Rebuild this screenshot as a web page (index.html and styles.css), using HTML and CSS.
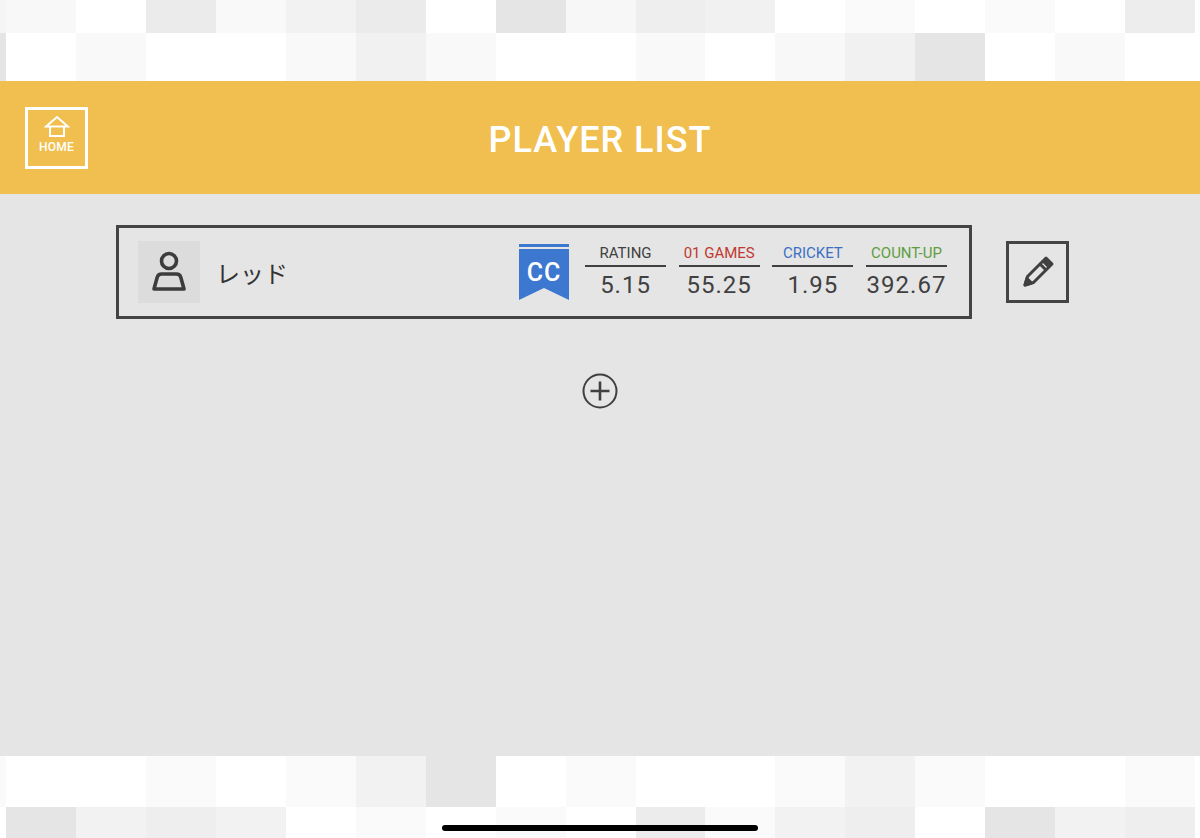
FILE: index.html
```html
<!DOCTYPE html>
<html lang="ja">
<head>
<meta charset="utf-8">
<title>Player List</title>
<link rel="stylesheet" href="styles.css">
</head>
<body>
<div class="screen">
  <div class="band band-top"></div>
  <header class="header">
    <a class="home" href="#">
      <svg class="home-icon" viewBox="0 0 26 24" width="26" height="24" fill="none" stroke="#fff" stroke-width="2"><path d="M2 11.5 13 2l11 9.500z" stroke-linejoin="miter"/><path d="M6 11.500V21h14v-9.500"/></svg>
      <span class="home-label">HOME</span>
    </a>
    <h1 class="title">PLAYER LIST</h1>
  </header>
  <main class="main">
    <div class="player-row">
      <section class="card">
        <div class="avatar">
          <svg viewBox="0 0 62 62" width="62" height="62" fill="none" stroke="#3c3c3c" stroke-width="3.600"><circle cx="31" cy="20" r="7.500"/><path d="M23.500 33h15c2.500 0 3.500 1 4.200 3l3.300 12H16l3.300-12c.7-2 1.700-3 4.200-3z" stroke-linejoin="round"/></svg>
        </div>
        <div class="name">レッド</div>
        <div class="badge">
          <svg class="badge-shape" viewBox="0 0 50 56" width="50" height="56"><rect width="50" height="3" fill="#3c78d0"/><path d="M0 5h50v51L25 44 0 56z" fill="#3c78d0"/></svg>
          <span class="badge-text">CC</span>
        </div>
        <div class="stats">
          <div class="stat"><div class="stat-label">RATING</div><div class="stat-value">5.15</div></div>
          <div class="stat"><div class="stat-label red">01 GAMES</div><div class="stat-value">55.25</div></div>
          <div class="stat"><div class="stat-label blue">CRICKET</div><div class="stat-value">1.95</div></div>
          <div class="stat"><div class="stat-label green">COUNT-UP</div><div class="stat-value">392.67</div></div>
        </div>
      </section>
      <a class="edit" href="#">
        <svg viewBox="0 0 34 34" width="34" height="34" fill="none" stroke="#404040" stroke-width="3" stroke-linejoin="round"><path d="M4 30l2.500-8.500L22 6l6 6-15.500 15.500z"/><path d="M19 9l6 6"/><path d="M4 30l2-6.500 4.500 4.500z" fill="#404040"/><path d="M23 5l2-2 6 6-2 2z" fill="#404040"/></svg>
      </a>
    </div>
    <button class="add" type="button" aria-label="add">
      <svg viewBox="0 0 36 36" width="36" height="36" fill="none" stroke="#404040"><circle cx="18" cy="18" r="16.500" stroke-width="2"/><path d="M18 8.500v19M8.500 18h19" stroke-width="2.600"/></svg>
    </button>
  </main>
  <div class="band band-bottom"></div>
  <div class="indicator"></div>
</div>
</body>
</html>
```
FILE: styles.css
```css
* { box-sizing: border-box; }
html, body { margin: 0; padding: 0; }
body {
  font-family: "Roboto", "Noto Sans CJK JP", sans-serif;
  background: #e5e5e5;
  color: #404040;
}
.screen {
  position: relative;
  width: 1200px;
  height: 838px;
  overflow: hidden;
  display: flex;
  flex-direction: column;
}
.band { flex: none; background-repeat: no-repeat; }
.band-top {
  height: 81px;
  background-image:
    linear-gradient(90deg,
      #f5f5f5 0 6px, #f8f8f8 6px 76px, #fff 76px 146px, #ebebeb 146px 216px, #f9f9f9 216px 286px,
      #f2f2f2 286px 356px, #ebebeb 356px 426px, #fff 426px 496px, #e5e5e5 496px 566px, #f7f7f7 566px 636px,
      #eee 636px 705px, #f1f1f1 705px 775px, #fff 775px 845px, #fafafa 845px 915px, #fff 915px 985px,
      #fafafa 985px 1055px, #fff 1055px 1125px, #ededed 1125px 1195px, #fff 1195px),
    linear-gradient(90deg,
      #e5e5e5 0 6px, #fff 6px 76px, #f9f9f9 76px 146px, #fff 146px 286px, #f9f9f9 286px 356px,
      #f1f1f1 356px 426px, #f9f9f9 426px 496px, #fff 496px 636px, #f9f9f9 636px 705px, #fff 705px 775px,
      #f8f8f8 775px 845px, #f1f1f1 845px 915px, #e5e5e5 915px 985px, #fff 985px 1055px, #f9f9f9 1055px 1125px,
      #fff 1125px);
  background-size: 100% 33px, 100% 48px;
  background-position: 0 0, 0 33px;
}
.band-bottom {
  height: 82px;
  background-image:
    linear-gradient(90deg,
      #fafafa 0 6px, #fff 6px 146px, #fafafa 146px 216px, #fff 216px 286px, #fafafa 286px 356px,
      #f2f2f2 356px 426px, #e5e5e5 426px 496px, #fff 496px 566px, #fafafa 566px 636px, #fff 636px 775px,
      #fafafa 775px 845px, #f2f2f2 845px 915px, #fafafa 915px 985px, #fff 985px 1125px, #fafafa 1125px 1195px,
      #fff 1195px),
    linear-gradient(90deg,
      #fff 0 6px, #e5e5e5 6px 76px, #f2f2f2 76px 146px, #eee 146px 216px, #f2f2f2 216px 286px,
      #fff 286px 356px, #fafafa 356px 426px, #fff 426px 496px, #fafafa 496px 566px, #fff 566px 636px,
      #ececec 636px 705px, #fafafa 705px 775px, #f2f2f2 775px 845px, #eee 845px 915px, #fff 915px 985px,
      #e5e5e5 985px 1055px, #f2f2f2 1055px 1125px, #eee 1125px 1195px, #fff 1195px);
  background-size: 100% 51px, 100% 31px;
  background-position: 0 0, 0 51px;
}
.header {
  flex: none;
  height: 113px;
  background: #f0bf50;
  display: flex;
  align-items: center;
  justify-content: center;
  position: relative;
}
.home {
  position: absolute;
  left: 25px;
  top: 26px;
  width: 63px;
  height: 62px;
  border: 3px solid #fff;
  display: flex;
  flex-direction: column;
  align-items: center;
  color: #fff;
  text-decoration: none;
}
.home-icon { margin-top: 5px; display: block; }
.home-label { font-size: 12px; line-height: 14px; margin-top: 1px; letter-spacing: .2px; font-weight: 500; }
.title {
  margin: 0;
  color: #fff;
  font-size: 36px;
  font-weight: 500;
  line-height: 40px;
  letter-spacing: 1px;
  position: relative;
  top: 2px;
}
.main { flex: 1; padding-top: 31px; display: flex; flex-direction: column; align-items: center; }
.player-row { display: flex; align-items: center; align-self: flex-start; margin-left: 116px; gap: 34px; }
.card {
  width: 856px;
  height: 94px;
  border: 3px solid #444;
  display: flex;
  align-items: center;
  padding: 0 22px 0 19px;
}
.avatar { width: 62px; height: 62px; background: #dcdcdc; flex: none; }
.avatar svg { display: block; }
.name { margin-left: 16px; font-size: 24px; color: #333; font-family: "Noto Sans CJK JP", sans-serif; flex: 1; }
.badge { position: relative; width: 50px; height: 56px; flex: none; }
.badge-shape { display: block; }
.badge-text {
  position: absolute;
  left: 0;
  right: 0;
  top: 15px;
  text-align: center;
  color: #fff;
  font-size: 25px;
  line-height: 28px;
  font-weight: 500;
  letter-spacing: 1px;
}
.stats { display: flex; margin-left: 16px; gap: 12.670px; }
.stat { width: 81px; text-align: center; }
.stat-label {
  font-size: 15px;
  line-height: 20px;
  height: 22px;
  border-bottom: 2px solid #404040;
  white-space: nowrap;
  box-sizing: content-box;
  height: 20px;
  padding-bottom: 2px;
}
.stat-value { font-size: 24px; line-height: 32px; letter-spacing: 1px; margin-top: 2px; }
.red { color: #c0392f; }
.blue { color: #3a70c4; }
.green { color: #5f9e3f; }
.edit {
  width: 63px;
  height: 62px;
  border: 3px solid #444;
  display: flex;
  align-items: center;
  justify-content: center;
  flex: none;
}
.add {
  margin: 54px 0 0;
  padding: 0;
  border: 0;
  background: none;
  width: 36px;
  height: 36px;
}
.add svg { display: block; }
.indicator {
  position: absolute;
  left: 442px;
  top: 825px;
  width: 316px;
  height: 6px;
  border-radius: 3px;
  background: #000;
}
```
